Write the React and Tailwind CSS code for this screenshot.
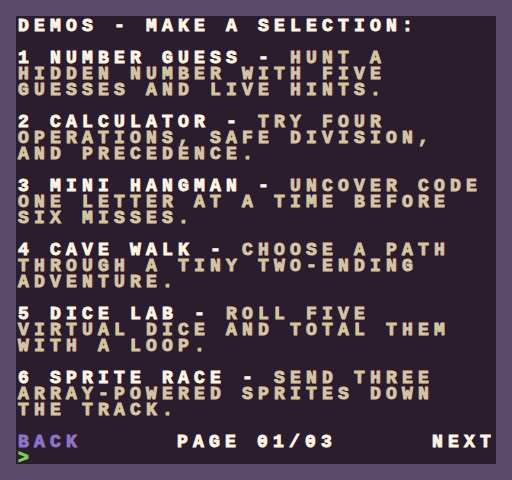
import React from 'react';

const demos = [
    { title: '1 NUMBER GUESS -', lines: [' HUNT A', 'HIDDEN NUMBER WITH FIVE', 'GUESSES AND LIVE HINTS.'] },
    { title: '2 CALCULATOR -', lines: [' TRY FOUR', 'OPERATIONS, SAFE DIVISION,', 'AND PRECEDENCE.'] },
    { title: '3 MINI HANGMAN -', lines: [' UNCOVER CODE', 'ONE LETTER AT A TIME BEFORE', 'SIX MISSES.'] },
    { title: '4 CAVE WALK -', lines: [' CHOOSE A PATH', 'THROUGH A TINY TWO-ENDING', 'ADVENTURE.'] },
    { title: '5 DICE LAB -', lines: [' ROLL FIVE', 'VIRTUAL DICE AND TOTAL THEM', 'WITH A LOOP.'] },
    { title: '6 SPRITE RACE -', lines: [' SEND THREE', 'ARRAY-POWERED SPRITES DOWN', 'THE TRACK.'] },
];

const Row = ({ children, className = '' }) => (
    <div className={`h-4 whitespace-pre ${className}`}>{children}</div>
);

export default function App() {
    return (
        <div className="w-[512px] h-[480px] bg-[#5a4b6b] p-4">
            <div
                className="h-full bg-[#2b1c2e] pt-[2px] pl-[2px] text-[18px] leading-4 font-bold tracking-[5.2px] text-[#fdf4e3] [-webkit-text-stroke:1px]"
                style={{ fontFamily: '"Liberation Mono", monospace' }}
            >
                <Row>DEMOS - MAKE A SELECTION:</Row>
                <Row />
                {demos.map((demo) => (
                    <div key={demo.title}>
                        <Row>
                            {demo.title}
                            <span className="text-[#d6c4a3]">{demo.lines[0]}</span>
                        </Row>
                        <Row className="text-[#d6c4a3]">{demo.lines[1]}</Row>
                        <Row className="text-[#d6c4a3]">{demo.lines[2]}</Row>
                        <Row />
                    </div>
                ))}
                <div className="h-4 flex justify-between">
                    <span className="text-[#8e73c9]">BACK</span>
                    <span>PAGE 01/03</span>
                    <span>NEXT</span>
                </div>
                <Row className="text-[#79cf4f]">&gt;</Row>
            </div>
        </div>
    );
}
